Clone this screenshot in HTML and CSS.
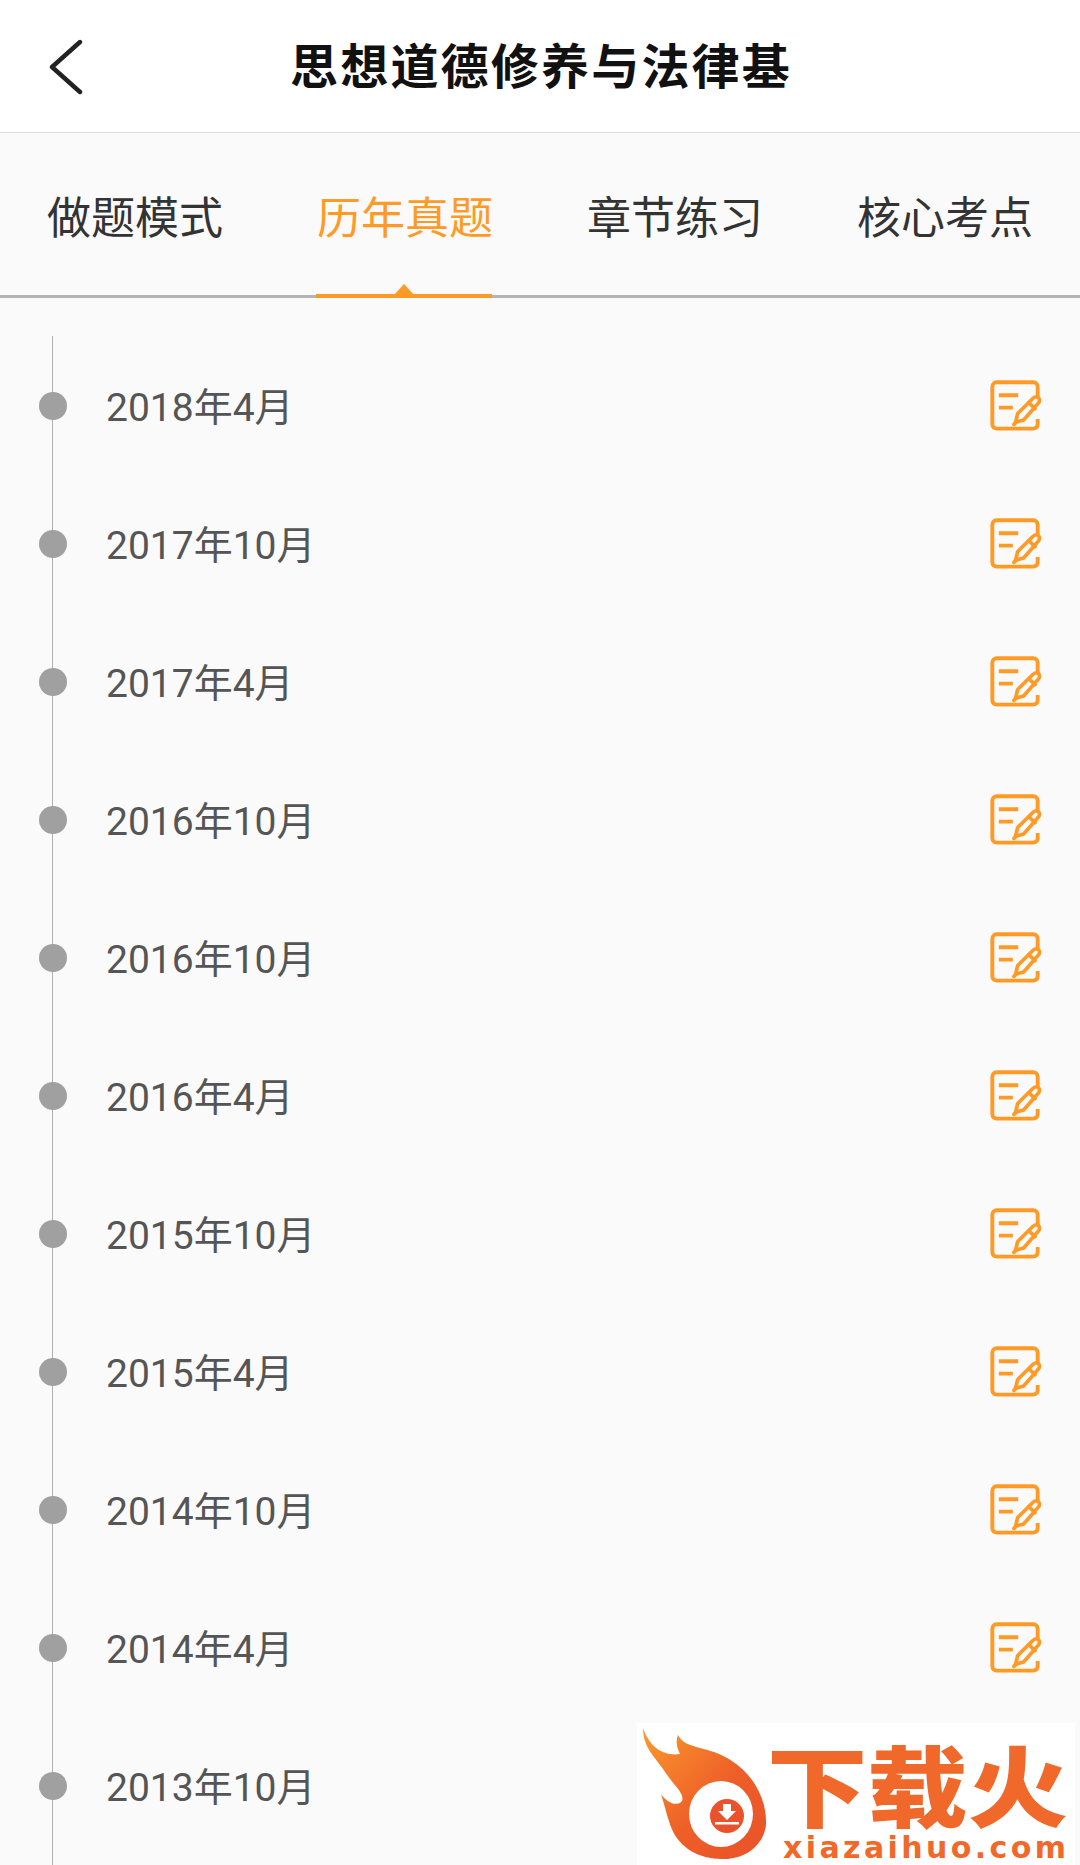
FILE: index.html
```html
<!DOCTYPE html>
<html lang="zh-CN">
<head>
  <meta charset="UTF-8">
  <title>思想道德修养与法律基</title>
  <link rel="stylesheet" href="styles.css">
</head>
<body>
  <svg width="0" height="0" class="defs">
    <symbol id="paper" viewBox="0 0 50 50">
      <path d="M46 18V7a4 4 0 0 0-4-4H8a4 4 0 0 0-4 4v35a4 4 0 0 0 4 4h34a4 4 0 0 0 4-4v-5" fill="none" stroke="currentColor" stroke-width="3.6"/>
      <path d="M10 15h18M10 26.500h13" fill="none" stroke="currentColor" stroke-width="3.6"/>
      <path d="M25.500 40l2-8 14-14c2-2 4.500-2 5.500-.5s1 3.500-1 5.500L33 38z" fill="none" stroke="currentColor" stroke-width="3.400" stroke-linejoin="round"/>
      <path d="M38 22l5.500 5.500M24 42l3-3" fill="none" stroke="currentColor" stroke-width="3.400" stroke-linecap="round"/>
    </symbol>
  </svg>

  <header class="topbar">
    <svg class="back" width="36" height="56" viewBox="0 0 36 56">
      <path d="M32 3L4 28l28 25" fill="none" stroke="#222" stroke-width="4.400" stroke-linecap="round" stroke-linejoin="round"/>
    </svg>
    <h1>思想道德修养与法律基</h1>
  </header>

  <nav class="tabs">
    <a class="tab">做题模式</a>
    <a class="tab active">历年真题</a>
    <a class="tab">章节练习</a>
    <a class="tab">核心考点</a>
  </nav>

  <ul class="timeline">
    <li class="row"><span class="dot"></span><span class="label">2018年4月</span><svg class="edit"><use href="#paper"/></svg></li>
    <li class="row"><span class="dot"></span><span class="label">2017年10月</span><svg class="edit"><use href="#paper"/></svg></li>
    <li class="row"><span class="dot"></span><span class="label">2017年4月</span><svg class="edit"><use href="#paper"/></svg></li>
    <li class="row"><span class="dot"></span><span class="label">2016年10月</span><svg class="edit"><use href="#paper"/></svg></li>
    <li class="row"><span class="dot"></span><span class="label">2016年10月</span><svg class="edit"><use href="#paper"/></svg></li>
    <li class="row"><span class="dot"></span><span class="label">2016年4月</span><svg class="edit"><use href="#paper"/></svg></li>
    <li class="row"><span class="dot"></span><span class="label">2015年10月</span><svg class="edit"><use href="#paper"/></svg></li>
    <li class="row"><span class="dot"></span><span class="label">2015年4月</span><svg class="edit"><use href="#paper"/></svg></li>
    <li class="row"><span class="dot"></span><span class="label">2014年10月</span><svg class="edit"><use href="#paper"/></svg></li>
    <li class="row"><span class="dot"></span><span class="label">2014年4月</span><svg class="edit"><use href="#paper"/></svg></li>
    <li class="row"><span class="dot"></span><span class="label">2013年10月</span></li>
  </ul>

  <div class="logo">
    <svg class="flame" width="130" height="142" viewBox="0 0 130 142">
      <defs>
        <linearGradient id="fire" x1="0" y1="0" x2="1" y2="1">
          <stop offset="0" stop-color="#fb9a2e"/>
          <stop offset="0.55" stop-color="#ee5f28"/>
          <stop offset="1" stop-color="#e9512a"/>
        </linearGradient>
      </defs>
      <path fill="url(#fire)" fill-rule="evenodd" d="M6 5C14 28 30 33 43 31C39 24 39 17 41 12C48 27 72 22 95 38C118 53 130 78 129 102C126 125 105 137 85 136C62 136 42 125 34 104C30 93 28 84 24 71C30 80 40 84 45 78C48 70 36 62 26 46C17 33 6 24 6 5ZM84 58A32 33 0 1 0 84 124A32 33 0 1 0 84 58Z"/>
      <circle cx="90" cy="93" r="17" fill="#e9522a"/>
      <path d="M86 81h8v7h5l-9 9-9-9h5zM78 99h24v2.500H78z" fill="#fff"/>
    </svg>
    <div class="brand">
      <span class="brand-cn">下载火</span>
      <span class="brand-en">xiazaihuo.com</span>
    </div>
  </div>
</body>
</html>
```

FILE: styles.css
```css
* {
  box-sizing: border-box;
}
html, body {
  margin: 0;
  padding: 0;
}
body {
  position: relative;
  height: 1865px;
  overflow: hidden;
  background: #fafafa;
  font-family: Roboto, "Noto Sans CJK SC", sans-serif;
  display: flex;
  flex-direction: column;
}
.defs {
  position: absolute;
}
.topbar {
  flex: none;
  height: 133px;
  padding-bottom: 6px;
  padding-left: 2px;
  background: #fff;
  border-bottom: 1px solid #dcdcdc;
  display: flex;
  align-items: center;
  justify-content: center;
  position: relative;
}
.back {
  position: absolute;
  left: 48px;
  top: 39px;
}
.topbar h1 {
  margin: 0;
  font-size: 48px;
  font-weight: 700;
  letter-spacing: 2.200px;
  color: #111;
}
.tabs {
  flex: none;
  height: 165px;
  padding-top: 2px;
  display: grid;
  grid-template-columns: repeat(4, 270px);
  border-bottom: 3px solid #b4b4b4;
}
.tab {
  display: flex;
  align-items: center;
  justify-content: center;
  font-size: 44px;
  color: #333;
  position: relative;
}
.tab.active {
  color: #ff9a26;
}
.tab.active::after {
  content: "";
  position: absolute;
  left: 46px;
  bottom: -3px;
  width: 176px;
  height: 4px;
  background: #ff9a26;
}
.tab.active::before {
  content: "";
  position: absolute;
  left: 124px;
  bottom: 0;
  border: 10px solid transparent;
  border-top: 0;
  border-bottom: 11px solid #ff9a26;
}
.timeline {
  flex: 1;
  list-style: none;
  margin: 0;
  padding: 39px 39px 0 39px;
  position: relative;
  overflow: hidden;
}
.timeline::before {
  content: "";
  position: absolute;
  left: 52px;
  top: 38px;
  bottom: 0;
  width: 1px;
  background: #b0b0b0;
}
.row {
  height: 138px;
  display: flex;
  align-items: center;
  position: relative;
}
.dot {
  width: 28px;
  height: 28px;
  border-radius: 50%;
  background: #a0a0a0;
  margin-right: 39px;
}
.label {
  flex: 1;
  font-size: 39px;
  line-height: 44px;
  padding-top: 4px;
  color: #555;
}
.edit {
  width: 54px;
  height: 54px;
  margin-right: -1px;
  color: #ff9a26;
}
.logo {
  position: absolute;
  left: 637px;
  top: 1723px;
  width: 438px;
  height: 142px;
  background: #fff;
  display: flex;
}
.flame {
  flex: none;
}
.brand {
  display: flex;
  flex-direction: column;
  align-items: flex-start;
  margin-top: 25px;
}
.brand-cn {
  font-size: 88px;
  line-height: 84px;
  font-weight: 900;
  transform: scaleX(1.140);
  transform-origin: left center;
  color: #f0682a;
}
.brand-en {
  font-family: "DejaVu Sans", sans-serif;
  font-size: 30px;
  line-height: 28px;
  font-weight: 700;
  letter-spacing: 3.400px;
  margin: 2px 0 0 16px;
  color: #f0682a;
}
```
